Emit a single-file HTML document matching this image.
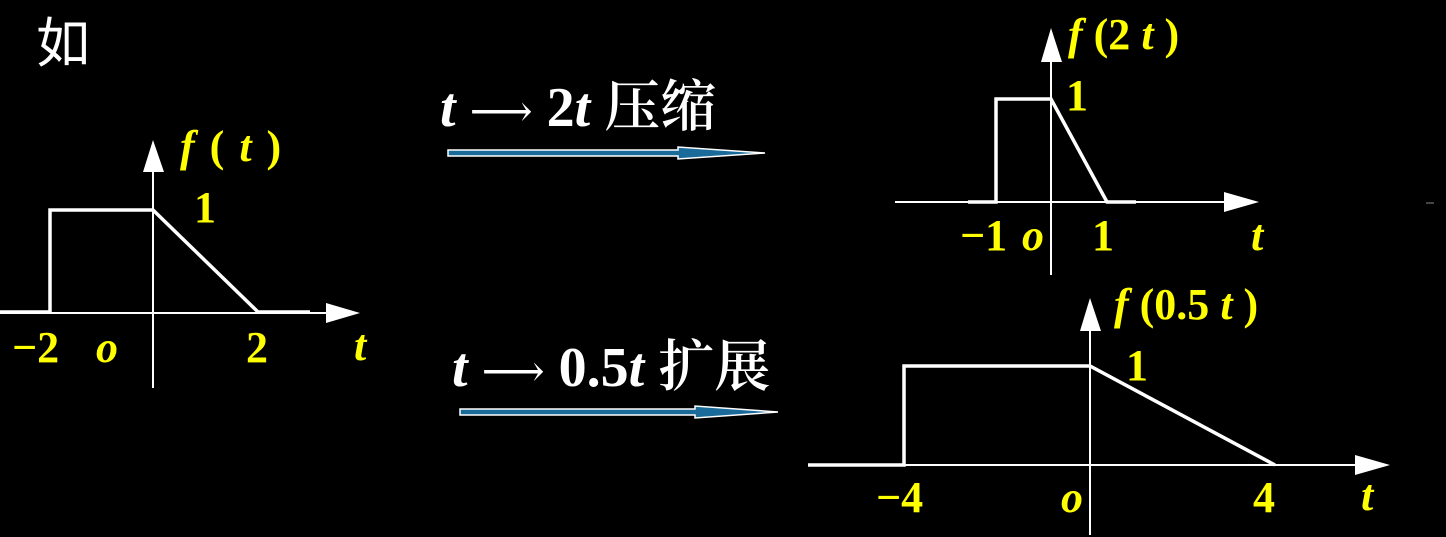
<!DOCTYPE html>
<html><head><meta charset="utf-8"><style>
html,body{margin:0;padding:0;background:#000;}
svg{display:block}
.y{fill:#ffff00;font-family:"Liberation Serif",serif;font-weight:bold;}
.w{fill:#fff;font-family:"Liberation Serif","Noto Serif CJK SC",serif;font-weight:bold;}
</style></head><body>
<svg width="1446" height="537" viewBox="0 0 1446 537" xmlns="http://www.w3.org/2000/svg">
<rect width="1446" height="537" fill="#000"/>
<text x="36" y="62" font-size="54" fill="#fff" font-family="'Noto Sans CJK SC',sans-serif">如</text>

<!-- left graph -->
<g stroke="#fff" fill="none">
<line x1="0" y1="313" x2="330" y2="313" stroke-width="2"/>
<line x1="153" y1="388" x2="153" y2="168" stroke-width="2"/>
<polyline points="0,312 50,312 50,210 153,210 258,312 310,312" stroke-width="3.5"/>
</g>
<polygon points="326,303 360,313 326,323" fill="#fff"/>
<polygon points="143,172 153,140 164,172" fill="#fff"/>
<text class="y" x="180" y="161" font-size="44" letter-spacing="2"><tspan font-style="italic">f</tspan> ( <tspan font-style="italic">t</tspan> )</text>
<text class="y" x="194" y="222" font-size="44">1</text>
<text class="y" x="12" y="362" font-size="44">−2</text>
<text class="y" x="96" y="362" font-size="44" font-style="italic">o</text>
<text class="y" x="246" y="362" font-size="44">2</text>
<text class="y" x="354" y="360" font-size="44" font-style="italic">t</text>

<!-- top arrow text -->
<text class="w" x="440" y="126" font-size="56"><tspan font-style="italic">t</tspan> <tspan font-family="'DejaVu Serif',serif" font-weight="normal" font-size="44">⟶</tspan> 2<tspan font-style="italic">t</tspan> <tspan font-family="'Noto Serif CJK SC',serif" font-weight="600" font-size="56">压缩</tspan></text>
<polygon points="448,150 678,150 678,147 765,153 678,159 678,156 448,156" fill="#1a6a9a" stroke="#fff" stroke-width="1.5"/>

<text class="w" x="452" y="386" font-size="56"><tspan font-style="italic">t</tspan> <tspan font-family="'DejaVu Serif',serif" font-weight="normal" font-size="44">⟶</tspan> 0.5<tspan font-style="italic">t</tspan> <tspan font-family="'Noto Serif CJK SC',serif" font-weight="600" font-size="56">扩展</tspan></text>
<polygon points="460,409 695,409 695,406 778,412 695,418 695,415 460,415" fill="#1a6a9a" stroke="#fff" stroke-width="1.5"/>

<!-- top right graph -->
<g stroke="#fff" fill="none">
<line x1="895" y1="202" x2="1230" y2="202" stroke-width="2"/>
<line x1="1051" y1="275" x2="1051" y2="58" stroke-width="2"/>
<polyline points="968,202 996,202 996,99 1051,99 1107,202 1136,202" stroke-width="3.5"/>
</g>
<polygon points="1224,192 1259,202 1224,212" fill="#fff"/>
<polygon points="1041,62 1051,28 1062,62" fill="#fff"/>
<text class="y" x="1068" y="49" font-size="44"><tspan font-style="italic">f</tspan> (2 <tspan font-style="italic">t</tspan> )</text>
<text class="y" x="1066" y="110" font-size="44">1</text>
<text class="y" x="960" y="250" font-size="44">−1</text>
<text class="y" x="1022" y="250" font-size="44" font-style="italic">o</text>
<text class="y" x="1092" y="250" font-size="44">1</text>
<text class="y" x="1251" y="250" font-size="44" font-style="italic">t</text>
<line x1="1426" y1="203" x2="1434" y2="203" stroke="#888" stroke-width="1"/>

<!-- bottom right graph -->
<g stroke="#fff" fill="none">
<line x1="808" y1="465" x2="1360" y2="465" stroke-width="2"/>
<line x1="1090" y1="535" x2="1090" y2="320" stroke-width="2"/>
<polyline points="808,465 904,465 904,366 1090,366 1275,465" stroke-width="3.5"/>
</g>
<polygon points="1355,455 1390,465 1355,475" fill="#fff"/>
<polygon points="1080,331 1090,298 1101,331" fill="#fff"/>
<text class="y" x="1114" y="319" font-size="44"><tspan font-style="italic">f</tspan> (0.5 <tspan font-style="italic">t</tspan> )</text>
<text class="y" x="1126" y="380" font-size="44">1</text>
<text class="y" x="876" y="512" font-size="44">−4</text>
<text class="y" x="1061" y="512" font-size="44" font-style="italic">o</text>
<text class="y" x="1253" y="512" font-size="44">4</text>
<text class="y" x="1361" y="510" font-size="44" font-style="italic">t</text>
</svg>
</body></html>
